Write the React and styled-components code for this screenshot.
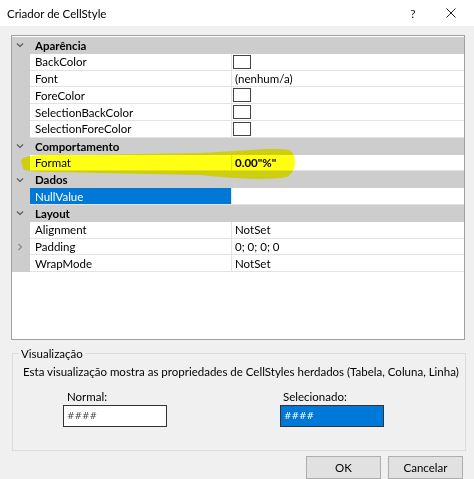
import React from 'react';
import styled, { createGlobalStyle } from 'styled-components';

const GlobalStyle = createGlobalStyle`
    html, body {
        margin: 0;
        padding: 0;
        background: #f0f0f0;
    }
    body {
        font-family: Lato, "Noto Sans", sans-serif;
        font-size: 11.5px;
        color: #000;
    }
`;

const Window = styled.div`
    position: relative;
    width: 474px;
    height: 479px;
    overflow: hidden;
    display: flex;
    flex-direction: column;
    background: #f0f0f0;
`;

const TitleBar = styled.div`
    height: 26px;
    flex-shrink: 0;
    background: #fff;
    display: flex;
    align-items: center;
    padding-left: 7px;
`;

const Title = styled.div`
    flex: 1;
    color: #000;
`;

const TitleButton = styled.div`
    width: ${p => p.w}px;
    display: flex;
    align-items: center;
    justify-content: center;
    font-size: 12px;
    color: #222;
`;

const Body = styled.div`
    flex: 1;
    display: flex;
    flex-direction: column;
    padding: 9px 9px 0 11px;
`;

const Grid = styled.div`
    height: 302px;
    border: 1px solid #a0a0a0;
    background: #fff;
    padding-top: 1px;
    box-sizing: content-box;
`;

const Row = styled.div`
    display: grid;
    grid-template-columns: 18px 201px 1fr;
    height: 16.8px;
    box-sizing: border-box;
`;

const Margin = styled.div`
    background: #cdcdcd;
    display: flex;
    align-items: center;
    justify-content: center;
    padding-right: 2px;
`;

const Category = styled.div`
    grid-column: 2 / 4;
    background: #cdcdcd;
    font-weight: bold;
    padding-left: 5px;
    display: flex;
    align-items: center;
`;

const Name = styled.div`
    display: flex;
    align-items: center;
    padding-left: 5px;
    border-bottom: 1px solid #e3e3e3;
    background: ${p => (p.selected ? '#0078d7' : '#fff')};
    color: ${p => (p.selected ? '#fff' : '#000')};
`;

const Value = styled.div`
    display: flex;
    align-items: center;
    padding-left: ${p => (p.swatch ? 1 : 3)}px;
    border-left: 1px solid #e3e3e3;
    border-bottom: 1px solid #e3e3e3;
    font-weight: ${p => (p.bold ? 'bold' : 'normal')};
`;

const Swatch = styled.div`
    width: 16px;
    height: 12px;
    border: 1px solid #444;
    background: #fff;
`;

const Highlight = styled.svg`
    position: absolute;
    left: 0;
    top: 0;
    pointer-events: none;
    mix-blend-mode: multiply;
`;

const GroupBox = styled.fieldset`
    margin: 7px -1px 0 1px;
    height: 104px;
    box-sizing: border-box;
    border: 1px solid #dcdcdc;
    padding: 5px 10px 0 10px;
    min-width: 0;
`;

const Legend = styled.legend`
    padding: 0 2px;
    margin-left: -4px;
    color: #000;
`;

const Description = styled.div`
    white-space: nowrap;
`;

const Previews = styled.div`
    display: flex;
    margin-top: 12px;
    padding-left: 40px;
    gap: 113px;
`;

const Preview = styled.div`
    display: flex;
    flex-direction: column;
`;

const PreviewLabel = styled.div`
    padding-left: ${p => p.indent}px;
    height: 14px;
    line-height: 14px;
`;

const PreviewBox = styled.div`
    width: 104px;
    height: 22px;
    box-sizing: border-box;
    border: 1px solid #333;
    background: ${p => (p.selected ? '#0078d7' : '#fff')};
    color: ${p => (p.selected ? '#fff' : '#444')};
    font-family: "DejaVu Sans", sans-serif;
    font-size: 9px;
    font-style: italic;
    display: flex;
    align-items: center;
    padding-left: 3px;
    margin-top: 1px;
`;

const Buttons = styled.div`
    display: flex;
    justify-content: flex-end;
    gap: 7px;
    margin-top: 5px;
    padding-right: 2px;
`;

const Button = styled.div`
    width: 75px;
    height: 23px;
    box-sizing: border-box;
    background: #e1e1e1;
    border: 1px solid #adadad;
    display: flex;
    align-items: center;
    justify-content: center;
`;

const Chevron = ({ open }) => (
    <svg width="8" height="8" viewBox="0 0 8 8">
        {open
            ? <polyline points="1,2.5 4,5.5 7,2.5" fill="none" stroke="#555" strokeWidth="1.1" />
            : <polyline points="2.5,1 5.5,4 2.5,7" fill="none" stroke="#888" strokeWidth="1.1" />}
    </svg>
);

const sections = [
    {
        title: 'Aparência',
        rows: [
            { name: 'BackColor', swatch: true },
            { name: 'Font', value: '(nenhum/a)' },
            { name: 'ForeColor', swatch: true },
            { name: 'SelectionBackColor', swatch: true },
            { name: 'SelectionForeColor', swatch: true },
        ],
    },
    {
        title: 'Comportamento',
        rows: [{ name: 'Format', value: '0.00"%"', bold: true }],
    },
    {
        title: 'Dados',
        rows: [{ name: 'NullValue', value: '', selected: true }],
    },
    {
        title: 'Layout',
        rows: [
            { name: 'Alignment', value: 'NotSet' },
            { name: 'Padding', value: '0; 0; 0; 0', expandable: true },
            { name: 'WrapMode', value: 'NotSet' },
        ],
    },
];

const App = () => (
    <Window>
        <GlobalStyle />
        <TitleBar>
            <Title>Criador de CellStyle</Title>
            <TitleButton w={30}>?</TitleButton>
            <TitleButton w={46}>
                <svg width="10" height="10" viewBox="0 0 10 10">
                    <path d="M0.5 0.5 L9.5 9.5 M9.5 0.5 L0.5 9.5" stroke="#222" strokeWidth="1" />
                </svg>
            </TitleButton>
        </TitleBar>
        <Body>
            <Grid>
                {sections.map(section => (
                    <React.Fragment key={section.title}>
                        <Row>
                            <Margin><Chevron open /></Margin>
                            <Category>{section.title}</Category>
                        </Row>
                        {section.rows.map(row => (
                            <Row key={row.name}>
                                <Margin>{row.expandable ? <Chevron /> : null}</Margin>
                                <Name selected={row.selected}>{row.name}</Name>
                                <Value swatch={row.swatch} bold={row.bold}>
                                    {row.swatch ? <Swatch /> : row.value}
                                </Value>
                            </Row>
                        ))}
                    </React.Fragment>
                ))}
            </Grid>
            <GroupBox>
                <Legend>Visualização</Legend>
                <Description>
                    Esta visualização mostra as propriedades de CellStyles herdados (Tabela, Coluna, Linha)
                </Description>
                <Previews>
                    <Preview>
                        <PreviewLabel indent={4}>Normal:</PreviewLabel>
                        <PreviewBox>####</PreviewBox>
                    </Preview>
                    <Preview>
                        <PreviewLabel indent={3}>Selecionado:</PreviewLabel>
                        <PreviewBox selected>####</PreviewBox>
                    </Preview>
                </Previews>
            </GroupBox>
            <Buttons>
                <Button>OK</Button>
                <Button>Cancelar</Button>
            </Buttons>
        </Body>
        <Highlight width="474" height="479" viewBox="0 0 474 479">
            <path
                d="M21 161 C22 155 40 154 80 155 L200 153 C240 151 272 147 290 150 C298 157 296 172 287 177 C262 181 232 178 200 175 L100 173 C60 172 30 173 23 169 Z"
                fill="#ffff00"
                opacity="0.92"
            />
        </Highlight>
    </Window>
);

export default App;
